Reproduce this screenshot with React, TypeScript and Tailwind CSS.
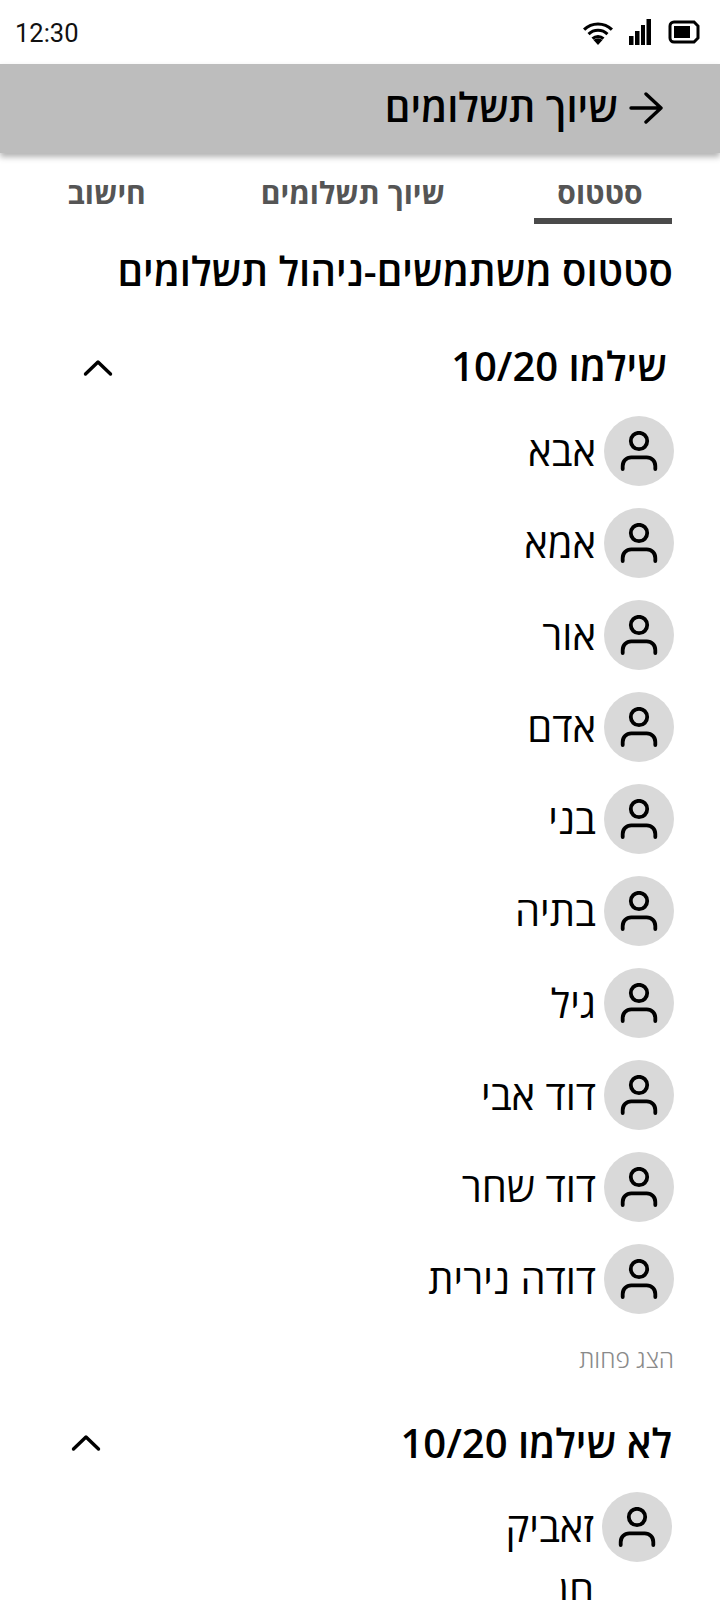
const paid = ["אבא", "אמא", "אור", "אדם", "בני", "בתיה", "גיל", "דוד אבי", "דוד שחר", "דודה נירית"];

const UserIcon = () => (
  <svg width="38" height="40" viewBox="0 0 38 40" fill="none" stroke="black" strokeWidth="3.800" strokeLinecap="round">
    <circle cx="19" cy="10" r="8.2" />
    <path d="M2.700 38v-3c0-5 3.600-8.600 8.600-8.600h15.400c5 0 8.600 3.600 8.600 8.600v3" />
  </svg>
);

const Chevron = () => (
  <svg width="32" height="20" viewBox="0 0 32 20" fill="none" stroke="black" strokeWidth="3.400" strokeLinecap="round" strokeLinejoin="round">
    <path d="M3.500 16L16 4l12.500 12" />
  </svg>
);

const Row = ({ name }: { name: string }) => (
  <div className="flex h-[70px] items-center gap-2">
    <div className="flex h-[70px] w-[70px] shrink-0 items-center justify-center rounded-full bg-[#d9d9d9]">
      <UserIcon />
    </div>
    <span className="text-[40px] leading-none text-black">{name}</span>
  </div>
);

const App = () => {
  return (
    <div dir="rtl" className="relative h-[1600px] w-[720px] overflow-hidden bg-white font-['Open_Sans','Noto_Sans',sans-serif] text-black">
      <div dir="ltr" className="flex h-16 items-center justify-between pl-[15px] pr-[20px]">
        <span className="pt-[2px] font-['Roboto',sans-serif] text-[25.500px] text-[#111]">12:30</span>
        <div className="flex items-center gap-[16px]">
          <svg width="32" height="26" viewBox="0 0 32 26" fill="black">
            <path d="M16 26l-4.500-5a6.500 6.500 0 0 1 9 0z" />
            <path d="M9.500 18.500a9.500 9.500 0 0 1 13 0l-2 2.200a6.500 6.500 0 0 0-9 0zM5.500 14a15 15 0 0 1 21 0l-2.100 2.200a12 12 0 0 0-16.800 0zM1 9.500a21.500 21.500 0 0 1 30 0l-2.200 2.200a18.400 18.400 0 0 0-25.600 0z" />
          </svg>
          <svg width="22" height="26" viewBox="0 0 22 26" fill="black" className="-ml-[1px] mr-[1px]">
            <rect x="0" y="17" width="4.500" height="9" />
            <rect x="6" y="12" width="4.500" height="14" />
            <rect x="12" y="6" width="4" height="20" />
            <rect x="17.500" y="0" width="4.500" height="26" />
          </svg>
          <svg width="32" height="24" viewBox="0 0 32 24" fill="none">
            <path d="M6 2h20l4 4v12l-4 4H6a4 4 0 0 1-4-4V6a4 4 0 0 1 4-4z" stroke="black" strokeWidth="3" />
            <rect x="6" y="6" width="16" height="12" fill="black" />
          </svg>
        </div>
      </div>

      <header className="relative z-10 flex h-[89px] items-center gap-[11px] bg-[#bdbdbd] pr-[57px] shadow-[0_4px_6px_rgba(0,0,0,0.3)]">
        <svg width="34" height="34" viewBox="0 0 34 34" fill="none" stroke="black" strokeWidth="3.400" strokeLinecap="round" strokeLinejoin="round" className="mb-[2px]">
          <path d="M2 17h30M17 3l15 14-15 14" />
        </svg>
        <h1 className="mb-[4px] text-[40px] leading-none font-[550]">שיוך תשלומים</h1>
      </header>

      <nav className="flex h-[71px] items-stretch pr-[48px] text-[30px] font-bold text-[#555]">
        <div className="flex w-[138px] items-center justify-center border-b-[6px] border-[#4a4a4a] pr-[6px] pt-[13px]">סטטוס</div>
        <div className="mr-[89px] flex items-center pt-[7px]">שיוך תשלומים</div>
        <div className="mr-[115px] flex items-center pt-[7px]">חישוב</div>
      </nav>

      <main className="pr-[46px] pt-[22px]">
        <h2 className="mr-[1px] text-[40px] leading-[50px] font-[550]">סטטוס משתמשים-ניהול תשלומים</h2>

        <div className="mt-[45px] flex h-[50px] items-center justify-between pl-[82px] pr-[7px]">
          <h3 className="text-[40px] leading-none font-[550]">שילמו 10/20</h3>
          <div className="mt-[3px]">
            <Chevron />
          </div>
        </div>

        <div className="mt-[25px] flex flex-col gap-[22px]">
          {paid.map((name) => (
            <Row key={name} name={name} />
          ))}
        </div>

        <div className="mt-[31px] text-[24.500px] font-light leading-7 text-[#8a8a8a]">הצג פחות</div>

        <div className="mt-[45px] flex h-[50px] items-center justify-between pl-[70px] pr-[2px]">
          <h3 className="text-[40px] leading-none font-[550]">לא שילמו 10/20</h3>
          <Chevron />
        </div>

        <div className="mt-[24px] pr-[2px]">
          <Row name="זאביק" />
          <div className="mr-[78px] mt-[8px] text-[40px] leading-none">חן</div>
        </div>
      </main>
    </div>
  );
};

export default App;
